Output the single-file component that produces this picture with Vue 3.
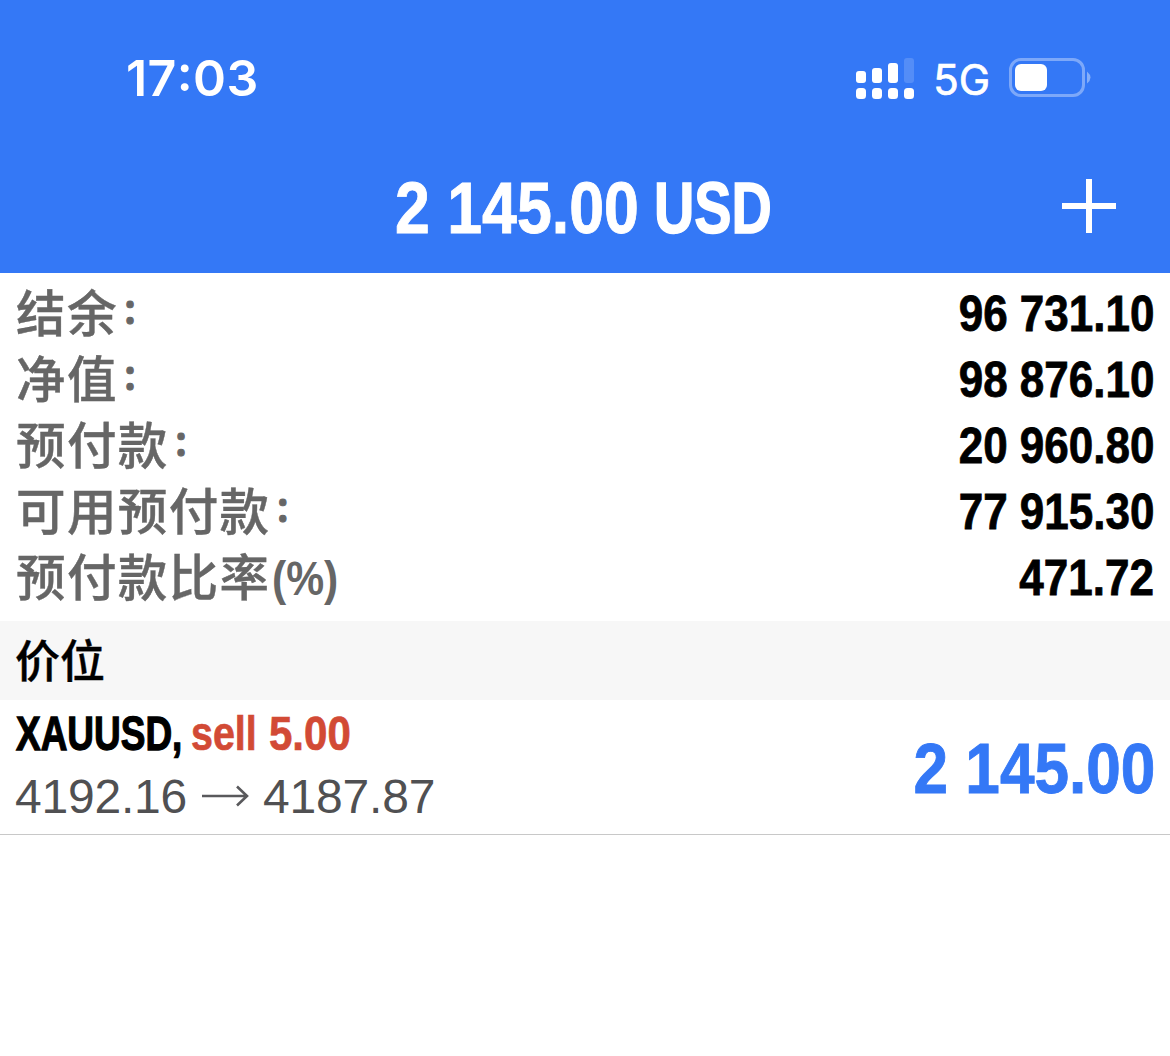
<script setup>
const rows = [
  { label: '结余', suffix: ':', value: '96 731.10' },
  { label: '净值', suffix: ':', value: '98 876.10' },
  { label: '预付款', suffix: ':', value: '20 960.80' },
  { label: '可用预付款', suffix: ':', value: '77 915.30' },
  { label: '预付款比率', suffix: '(%)', value: '471.72' },
]
</script>

<template>
  <main class="screen">
    <header class="header">
      <div class="status">
        <span class="time">17<span class="tick">:</span>03</span>
        <div class="indicators">
          <svg class="signal" width="60" height="44" viewBox="0 0 60 44" fill="#fff">
            <rect x="1" y="15" width="10" height="12" rx="3" />
            <rect x="17" y="12" width="10" height="15" rx="3" />
            <rect x="33" y="7" width="10" height="20" rx="3" />
            <rect x="49" y="2" width="10" height="25" rx="3" opacity=".16" />
            <rect v-for="x in [1, 17, 33, 49]" :key="x" :x="x" y="32" width="10" height="11" rx="3.5" />
          </svg>
          <span class="network">5G</span>
          <svg class="battery" width="84" height="40" viewBox="0 0 84 40">
            <rect x="2.5" y="1.5" width="73" height="36" rx="10.5" fill="none" stroke="#fff" stroke-opacity=".36" stroke-width="3" />
            <rect x="7" y="6" width="32" height="27" rx="6" fill="#fff" />
            <path d="M79 13.500q7 6 0 12z" fill="#fff" opacity=".4" />
          </svg>
        </div>
      </div>
      <div class="titlebar">
        <h1 class="title"><span class="amount">2 145.00</span> <span class="currency">USD</span></h1>
        <svg class="plus" width="54" height="54" viewBox="0 0 54 54"><path d="M27 0v54M0 27h54" stroke="#fff" stroke-width="6" /></svg>
      </div>
    </header>
    <section class="summary">
      <div v-for="r in rows" :key="r.label" class="row">
        <span class="label">{{ r.label }}<span :class="r.suffix === ':' ? 'colon' : 'percent'">{{ r.suffix }}</span></span>
        <span class="value">{{ r.value }}</span>
      </div>
    </section>
    <h2 class="section">价位</h2>
    <section class="position">
      <div class="details">
        <div class="symbol"><span class="name">XAUUSD,</span> <span class="side">sell</span> <span class="lots">5.00</span></div>
        <div class="prices"><span>4192.16</span><svg width="47" height="22" viewBox="0 0 47 22"><path d="M0 11H45M35 1.500l10 9.500-10 9.500" fill="none" stroke="#59595c" stroke-width="2.600" /></svg><span>4187.87</span></div>
      </div>
      <div class="profit">2 145.00</div>
    </section>
  </main>
</template>

<style>
body { margin: 0; background: #fff; }
</style>
<style scoped>
.screen { width: 1170px; height: 1056px; background: #fff; font-family: "Liberation Sans", "Noto Sans CJK SC", sans-serif; overflow: hidden; }
.header { height: 273px; background: #3478f6; color: #fff; }
.status { height: 156px; box-sizing: border-box; padding: 0 78px 0 126px; display: flex; justify-content: space-between; align-items: center; }
.time { font: 600 50px/60px Inter, sans-serif; letter-spacing: .4px; }
.tick { vertical-align: 5px; line-height: 1; }
.indicators { display: flex; align-items: center; }
.signal { margin-right: 1px; }
.network { font: 400 42px/50px Inter, sans-serif; margin: 3px 18px 0 17px; -webkit-text-stroke: .7px #fff; }
.titlebar { height: 100px; padding: 0 54px 0 53px; display: grid; grid-template-columns: 1fr auto 1fr; align-items: center; }
.title { grid-column: 2; margin: 3px 3px 0 0; font: 700 72px/80px "Liberation Sans", sans-serif; display: flex; gap: 14px; white-space: nowrap; }
.amount { width: 245px; transform: scaleX(.87); transform-origin: left; -webkit-text-stroke: .9px #fff; }
.currency { width: 118px; transform: scaleX(.775); transform-origin: left; -webkit-text-stroke: 1.500px #fff; }
.plus { justify-self: end; }
.summary { padding: 8px 16px 10px; }
.row { height: 66px; display: flex; justify-content: space-between; align-items: center; }
.label { display: flex; height: 66px; margin-top: -6px; font: 500 49.5px/66px "Noto Sans CJK SC", sans-serif; letter-spacing: 1.400px; color: #666; -webkit-text-stroke: .4px #666; }
.colon { margin: -6px 0 0 6px; font-size: 42px; -webkit-text-stroke: 1px #666; }
.percent { margin: 3px 0 0 1px; font: 700 49px/66px "Liberation Sans", sans-serif; letter-spacing: 0; transform: scaleX(.87); transform-origin: left; -webkit-text-stroke: 0; }
.value { font-weight: 700; font-size: 50px; transform: scaleX(.88); transform-origin: right; -webkit-text-stroke: .8px #000; }
.section { margin: 0; height: 79px; padding-left: 15px; background: #f7f7f7; font: 500 45px/75px "Noto Sans CJK SC", sans-serif; box-sizing: border-box; -webkit-text-stroke: .4px #000; }
.position { height: 135px; box-sizing: border-box; border-bottom: 1px solid #c8c8c8; padding: 0 16px; display: flex; justify-content: space-between; align-items: center; }
.symbol { display: flex; font-weight: 700; font-size: 48px; line-height: 62px; white-space: nowrap; margin: -3px 0 1px; }
.symbol > span { transform-origin: left; }
.name { width: 175px; transform: scaleX(.77); -webkit-text-stroke: 1.300px #000; }
.side { width: 78px; transform: scaleX(.82); }
.lots { transform: scaleX(.875); }
.side, .lots { color: #d24a35; -webkit-text-stroke: .7px #d24a35; }
.prices { display: flex; align-items: center; font-size: 48px; line-height: 62px; color: #505052; letter-spacing: -.2px; margin-left: -1px; }
.prices svg { margin: -2px 14px 0 15px; }
.profit { color: #3478f6; font-weight: 700; font-size: 71px; line-height: 80px; margin: 3px -1px 0 0; transform: scaleX(.875); transform-origin: right; -webkit-text-stroke: .9px #3478f6; }
</style>
